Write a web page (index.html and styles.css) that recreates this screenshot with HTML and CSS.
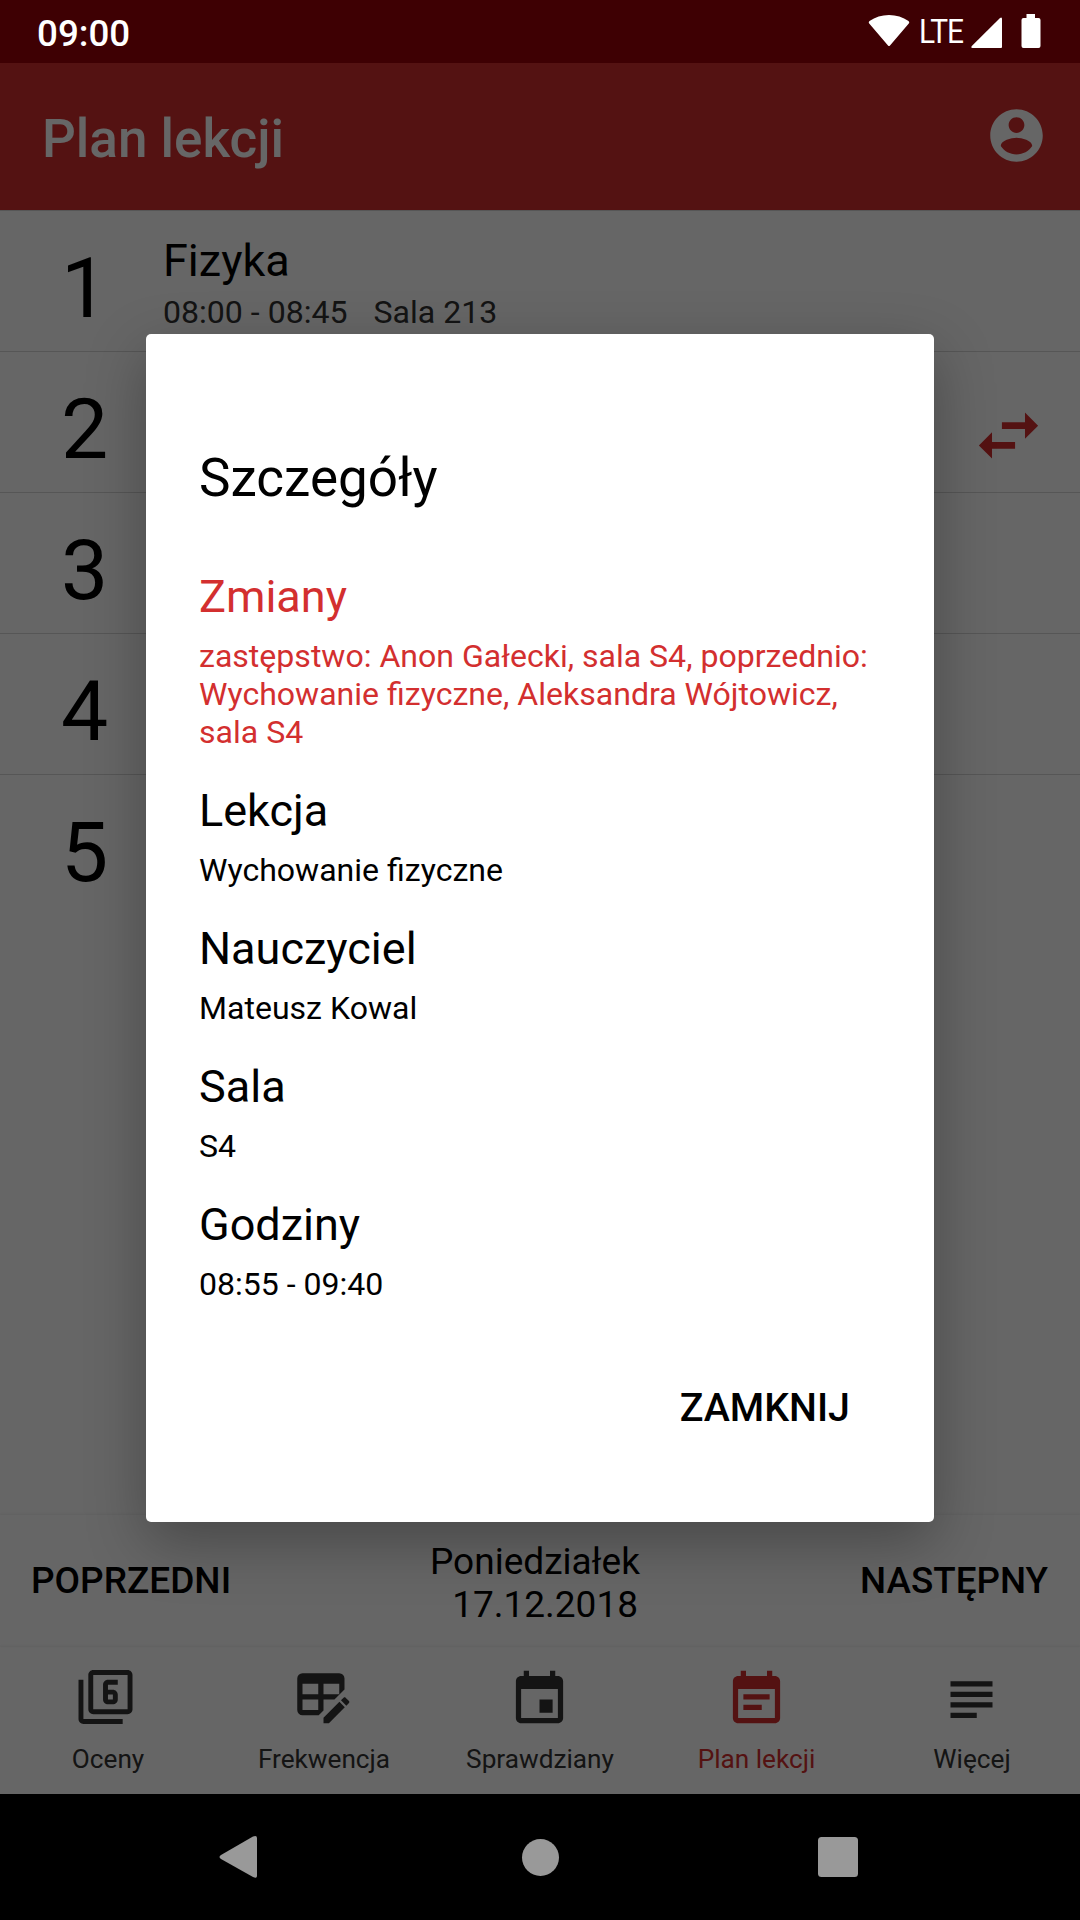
FILE: index.html
```html
<!DOCTYPE html>
<html lang="pl">
<head>
<meta charset="utf-8">
<title>Plan lekcji</title>
<link rel="stylesheet" href="styles.css">
</head>
<body>
<div class="phone">
  <header class="status">
    <span class="clock">09:00</span>
    <svg class="wifi" width="42" height="33" viewBox="0 0 42 33"><path d="M1.500 7Q10 1 21 1T40.500 7Q42 8 40.800 9.500L22 31.500Q21 32.500 20 31.500L1.200 9.500Q0 8 1.500 7Z"/></svg>
    <span class="network">LTE</span>
    <svg class="signal" width="32" height="32" viewBox="0 0 32 32"><path d="M29 1Q31 -.5 31 2V30Q31 31 30 31H1.500Q-.5 31 .8 29Z"/></svg>
    <svg class="battery" width="20" height="35" viewBox="0 0 20 35"><path d="M5.500 0H14V4H17.500Q19.500 4 19.500 6V32Q19.500 34 17.500 34H2.500Q.5 34 .5 32V6Q.5 4 2.500 4H5.500Z"/></svg>
  </header>

  <div class="toolbar">
    <h1 class="toolbar-title">Plan lekcji</h1>
    <svg class="icon" viewBox="0 0 24 24"><path d="M12 2C6.480 2 2 6.480 2 12s4.480 10 10 10 10-4.480 10-10S17.520 2 12 2zm0 3c1.660 0 3 1.340 3 3s-1.340 3-3 3-3-1.340-3-3 1.340-3 3-3zm0 14.200c-2.500 0-4.710-1.280-6-3.220.03-1.990 4-3.080 6-3.080 1.990 0 5.970 1.090 6 3.080-1.290 1.940-3.500 3.220-6 3.220z"/></svg>
  </div>

  <main class="lessons">
    <div class="lesson">
      <span class="number">1</span>
      <div class="info">
        <div class="subject">Fizyka</div>
        <div class="meta"><span>08:00 - 08:45</span><span>Sala 213</span></div>
      </div>
    </div>
    <div class="lesson">
      <span class="number">2</span>
      <svg class="swap" viewBox="0 0 24 24"><path d="M6.990 11L3 15l3.990 4v-3H14v-2H6.990v-3zM21 9l-3.990-4v3H10v2h7.010v3L21 9z"/></svg>
    </div>
    <div class="lesson"><span class="number">3</span></div>
    <div class="lesson"><span class="number">4</span></div>
    <div class="lesson"><span class="number">5</span></div>
  </main>

  <div class="daybar">
    <span class="day-button">POPRZEDNI</span>
    <div class="date"><div>Poniedziałek</div><div class="date-value">17.12.2018</div></div>
    <span class="day-button next">NASTĘPNY</span>
  </div>

  <nav class="tabs">
    <div class="tab">
      <svg class="icon" viewBox="0 0 63 63"><path transform="translate(-.95 -.45) scale(2.4545)" d="M3 5H1v16c0 1.100.9 2 2 2h16v-2H3V5zm18-4H7c-1.100 0-2 .9-2 2v14c0 1.100.9 2 2 2h14c1.100 0 2-.9 2-2V3c0-1.100-.9-2-2-2zm0 16H7V3h14v14zm-8-2h2c1.100 0 2-.89 2-2v-2c0-1.110-.9-2-2-2h-2V7h4V5h-4c-1.100 0-2 .89-2 2v6c0 1.110.9 2 2 2zm0-4h2v2h-2v-2z"/></svg>
      <span>Oceny</span>
    </div>
    <div class="tab">
      <svg class="icon shifted" viewBox="0 0 24 24"><path d="M21.700 13.350L20.700 14.350L18.650 12.300L19.650 11.300C19.860 11.090 20.210 11.090 20.420 11.300L21.700 12.580C21.910 12.790 21.910 13.140 21.700 13.350M12 18.940L18.060 12.880L20.110 14.930L14.060 21H12V18.940M4 2H18A2 2 0 0 1 20 4V8.170L16.170 12H12V16.170L10.170 18H4A2 2 0 0 1 2 16V4A2 2 0 0 1 4 2M4 6V10H10V6H4M12 6V10H18V6H12M4 12V16H10V12H4Z"/></svg>
      <span>Frekwencja</span>
    </div>
    <div class="tab">
      <svg class="icon shifted" viewBox="0 0 24 24"><path d="M17 12h-5v5h5v-5zM16 1v2H8V1H6v2H5c-1.110 0-1.990.9-1.990 2L3 19c0 1.100.89 2 2 2h14c1.100 0 2-.9 2-2V5c0-1.100-.9-2-2-2h-1V1h-2zm3 18H5V8h14v11z"/></svg>
      <span>Sprawdziany</span>
    </div>
    <div class="tab active">
      <svg class="icon" viewBox="0 0 24 24"><path d="M17 10H7v2h10v-2zm2-7h-1V1h-2v2H8V1H6v2H5c-1.110 0-1.990.9-1.990 2L3 19c0 1.100.89 2 2 2h14c1.100 0 2-.9 2-2V5c0-1.100-.9-2-2-2zm0 16H5V8h14v11zm-5-5H7v2h7v-2z"/></svg>
      <span>Plan lekcji</span>
    </div>
    <div class="tab">
      <svg class="icon shifted" viewBox="0 0 24 24"><path d="M14 17H4v2h10v-2zm6-8H4v2h16V9zM4 15h16v-2H4v2zM4 5v2h16V5H4z"/></svg>
      <span>Więcej</span>
    </div>
  </nav>

  <footer class="system">
    <svg width="44" height="44" viewBox="0 0 44 44"><path d="M4 20L36 1.500Q40 0 40 3V41Q40 44 36 42L4 24Q1 22 4 20Z"/></svg>
    <svg width="44" height="44" viewBox="0 0 44 44"><circle cx="23.500" cy="22.500" r="18.500"/></svg>
    <svg width="44" height="44" viewBox="0 0 44 44"><rect x="2" y="2" width="40" height="40" rx="3.500"/></svg>
  </footer>

  <div class="scrim">
    <section class="dialog">
      <h2 class="dialog-title">Szczegóły</h2>
      <dl class="details">
        <div class="detail changed"><dt>Zmiany</dt><dd>zastępstwo: Anon Gałecki, sala S4, poprzednio: Wychowanie fizyczne, Aleksandra Wójtowicz, sala S4</dd></div>
        <div class="detail"><dt>Lekcja</dt><dd>Wychowanie fizyczne</dd></div>
        <div class="detail"><dt>Nauczyciel</dt><dd>Mateusz Kowal</dd></div>
        <div class="detail"><dt>Sala</dt><dd>S4</dd></div>
        <div class="detail"><dt>Godziny</dt><dd>08:55 - 09:40</dd></div>
      </dl>
      <div class="close">ZAMKNIJ</div>
    </section>
  </div>
</div>
</body>
</html>
```
FILE: styles.css
```css
* { box-sizing: border-box; }
body { margin: 0; font-family: Roboto, sans-serif; color: #000; }
h1, h2, dl, dt, dd { margin: 0; font-weight: 400; }
svg { display: block; fill: currentColor; flex: none; }

.phone {
  position: relative;
  display: grid;
  grid-template-rows: 63px 147px 1fr 132px 147px 126px;
  width: 1080px;
  height: 1920px;
  overflow: hidden;
  background: #fff;
}

.status { display: flex; align-items: flex-start; padding: 0 39px 0 37px; background: #3e0003; color: #fff; z-index: 2; }
.clock { flex: 1; padding-top: 12px; font-size: 36.75px; line-height: 43px; font-weight: 500; }
.wifi { margin: 14px 9px 0 0; }
.network { padding-top: 13px; width: 52px; font-size: 32.5px; line-height: 38px; letter-spacing: -1px; transform: scaleX(.92); transform-origin: left; }
.signal { margin: 17px 18px 0 0; }
.battery { margin-top: 14px; }

.toolbar { display: flex; align-items: center; justify-content: space-between; padding: 0 32px 0 42px; background: #d32f2f; color: #fff; }
.toolbar .icon { margin-bottom: 2px; }
.toolbar-title { padding-top: 4px; font-size: 53px; line-height: 62px; font-weight: 500; }
.icon { width: 63px; height: 63px; }

.lesson { display: flex; height: 141px; border-bottom: 1px solid #d8d8d8; padding-right: 32px; }
.lesson:first-child { height: 142px; border-top: 1px solid #d8d8d8; }
.lesson:last-child { border-bottom: 0; }
.number { width: 163px; padding: 29px 0 0 61px; font-size: 84px; line-height: 98px; }
.info { padding-top: 24px; }
.subject { font-size: 45px; line-height: 52px; }
.meta { display: flex; gap: 26px; color: #333; font-size: 32.1px; line-height: 38px; padding-top: 6px; }
.swap { width: 79px; height: 79px; margin: 43.5px 0 0 auto; color: #d32f2f; }

.daybar {
  display: grid;
  grid-template-columns: 1fr auto 1fr;
  align-items: center;
  padding: 0 32px 0 31px;
  box-shadow: 0 -1px 3px rgba(0, 0, 0, .07);
  font-size: 37px;
  line-height: 43px;
}
.day-button { padding-bottom: 2px; font-weight: 500; }
.next { font-size: 36.8px; text-align: right; }
.date { margin: 4px 9px 0 0; text-align: right; }
.date-value { padding-right: 2px; }

.tabs { display: grid; grid-template-columns: repeat(5, 1fr); padding-top: 21px; box-shadow: 0 -1px 3px rgba(0, 0, 0, .07); color: #333; }
.tab { display: flex; flex-direction: column; align-items: center; gap: 12px; font-size: 26.2px; line-height: 32px; }
.shifted { margin-right: 2px; }
.tab.active { padding-left: 1px; color: #d32f2f; }

.system { display: flex; align-items: center; justify-content: space-between; padding: 0 220px 0 217px; background: #000; color: #999; z-index: 2; }

/* Dimmed layer with the dialog, between the system bars */
.scrim { position: absolute; inset: 0; display: flex; justify-content: center; align-items: flex-start; padding-top: 334px; background: rgba(0, 0, 0, .6); }
.dialog { width: 788px; height: 1188px; padding: 113px 53px 0; border-radius: 5px; background: #fff; box-shadow: 0 20px 60px rgba(0, 0, 0, .3); }
.dialog-title { font-size: 53px; line-height: 62px; }
.details { display: flex; flex-direction: column; gap: 34px; margin-top: 62px; }
.changed { color: #d32f2f; }
.detail dt { font-size: 45px; line-height: 52px; }
.detail dd { margin: 14px -10px 0 0; font-size: 32.06px; line-height: 38px; }
.close { margin: 82px 31px 0 0; text-align: right; font-size: 39.375px; line-height: 46px; font-weight: 500; }
```
